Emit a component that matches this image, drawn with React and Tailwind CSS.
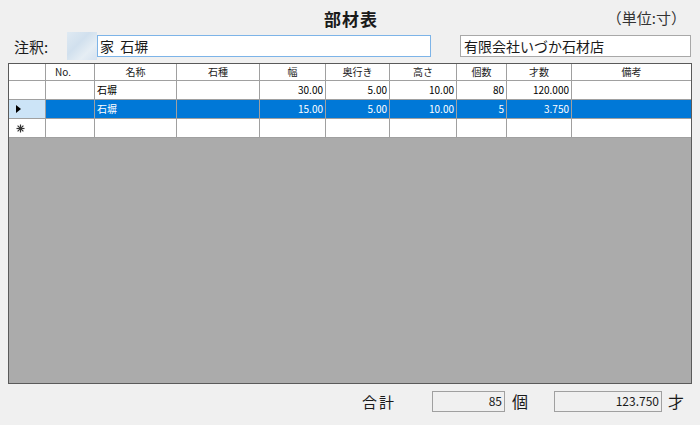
import React from "react";

const font = { fontFamily: '"Noto Sans CJK JP", "Noto Sans", sans-serif' };

const columns = [
  { label: "No.", w: "w-[49px]", align: "left" },
  { label: "名称", w: "w-[82px]", align: "left" },
  { label: "石種", w: "w-[83px]", align: "left" },
  { label: "幅", w: "w-[66px]", align: "right" },
  { label: "奥行き", w: "w-[64px]", align: "right" },
  { label: "高さ", w: "w-[67px]", align: "right" },
  { label: "個数", w: "w-[50px]", align: "right" },
  { label: "才数", w: "w-[65px]", align: "right" },
  { label: "備考", w: "w-[119px]", align: "left" },
];

const rows = [
  { cells: ["", "石塀", "", "30.00", "5.00", "10.00", "80", "120.000", ""] },
  { cells: ["", "石塀", "", "15.00", "5.00", "10.00", "5", "3.750", ""], selected: true },
  { cells: ["", "", "", "", "", "", "", "", ""], isNew: true },
];

function NewRowGlyph() {
  return (
    <svg width="9" height="9" viewBox="0 0 9 9" className="text-[#333]">
      <g stroke="currentColor" strokeWidth="1.2">
        <line x1="4.5" y1="0.5" x2="4.5" y2="8.5" />
        <line x1="0.5" y1="4.5" x2="8.5" y2="4.5" />
        <line x1="1.6" y1="1.6" x2="7.4" y2="7.4" />
        <line x1="7.4" y1="1.6" x2="1.6" y2="7.4" />
      </g>
    </svg>
  );
}

function CurrentRowGlyph() {
  return (
    <svg width="5" height="8" viewBox="0 0 5 8">
      <polygon points="0,0 5,4 0,8" fill="#000" />
    </svg>
  );
}

function GridRow({ row }) {
  const rowHeaderClass = row.selected ? "bg-[#cce4f7]" : "bg-white";
  return (
    <div className="flex h-[19px] border-b border-[#a0a0a0]">
      <div className={`w-[37px] shrink-0 border-r border-[#a0a0a0] flex items-center pl-[7px] ${rowHeaderClass}`}>
        {row.selected && <CurrentRowGlyph />}
        {row.isNew && <NewRowGlyph />}
      </div>
      {columns.map((col, i) => (
        <div
          key={col.label}
          className={`${col.w} shrink-0 flex items-center px-[2px] text-[10px] leading-none ${
            i < columns.length - 1 ? "border-r border-[#a0a0a0]" : ""
          } ${col.align === "right" ? "justify-end" : "justify-start"} ${
            row.selected ? "bg-[#0078d7] text-white" : "bg-white text-black"
          }`}
        >
          {row.cells[i]}
        </div>
      ))}
    </div>
  );
}

export default function App() {
  return (
    <div className="w-[700px] h-[425px] bg-[#f0f0f0] text-[#1a1a1a] overflow-hidden" style={font}>
      <div className="grid grid-cols-[1fr_auto_1fr] items-center h-[35px] pt-[2px]">
        <div />
        <div className="text-[17px] font-bold tracking-[1px] pl-[2px]">部材表</div>
        <div className="text-right pr-[14px] text-[15px] text-[#333]">（単位:寸）</div>
      </div>

      <div className="flex items-center h-[22px]">
        <div className="w-[67px] pl-[14px] text-[15px] leading-none">注釈:</div>
        <div className="w-[30px] h-[28px] bg-[linear-gradient(135deg,#dbe8f3,#c9dced_40%,#e3edf5_70%,#cfdff0)] opacity-80" />
        <div className="w-[334px] h-[22px] bg-white border border-[#7db4e8] flex items-center pl-[2px] text-[14px] leading-none">
          家&nbsp;&nbsp;石塀
        </div>
        <div className="w-[29px]" />
        <div className="w-[231px] h-[22px] bg-white border border-[#a8a8a8] flex items-center pl-[3px] text-[14px] leading-none">
          有限会社いづか石材店
        </div>
      </div>

      <div className="ml-[8px] mt-[6px] w-[684px] h-[321px] border border-[#5a5a5a] bg-[#ababab] flex flex-col">
        <div className="flex h-[17px] bg-white border-b border-[#a0a0a0]">
          <div className="w-[37px] shrink-0 border-r border-[#a0a0a0]" />
          {columns.map((col, i) => (
            <div
              key={col.label}
              className={`${col.w} shrink-0 flex items-center text-[10px] leading-none ${
                i === 0 ? "justify-start pl-[9px]" : "justify-center"
              } ${i < columns.length - 1 ? "border-r border-[#a0a0a0]" : ""}`}
            >
              {col.label}
            </div>
          ))}
        </div>
        {rows.map((row, i) => (
          <GridRow key={i} row={row} />
        ))}
      </div>

      <div className="flex items-center h-[22px] mt-[6px]">
        <div className="w-[362px]" />
        <div className="w-[70px] text-[15px] leading-none tracking-[2px]">合計</div>
        <div className="w-[73px] h-[21px] border border-[#a0a0a0] bg-[#f0f0f0] flex items-center justify-end pr-[2px] text-[12px] leading-none">
          85
        </div>
        <div className="w-[49px] pl-[7px] text-[16px] leading-none">個</div>
        <div className="w-[108px] h-[21px] border border-[#a0a0a0] bg-[#f0f0f0] flex items-center justify-end pr-[2px] text-[12px] leading-none">
          123.750
        </div>
        <div className="pl-[6px] text-[16px] leading-none">才</div>
      </div>
    </div>
  );
}
